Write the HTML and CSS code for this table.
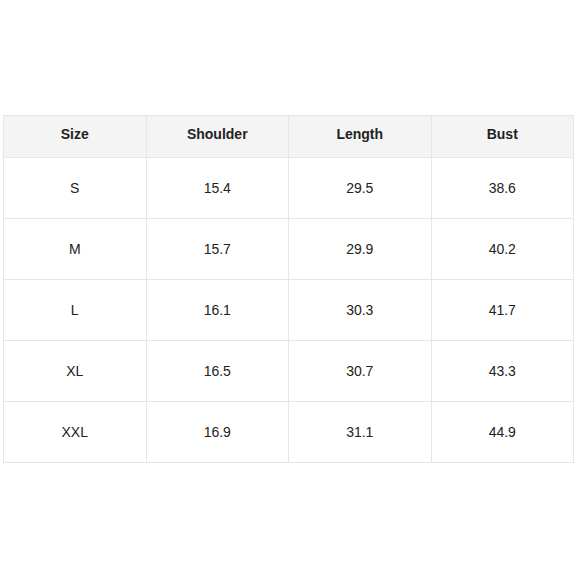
FILE: index.html
```html
<!DOCTYPE html>
<html>
<head>
<meta charset="utf-8">
<link rel="stylesheet" href="styles.css">
</head>
<body>
<div class="wrap">
<table class="sizes">
<thead>
<tr><th>Size</th><th>Shoulder</th><th>Length</th><th>Bust</th></tr>
</thead>
<tbody>
<tr><td>S</td><td>15.4</td><td>29.5</td><td>38.6</td></tr>
<tr><td>M</td><td>15.7</td><td>29.9</td><td>40.2</td></tr>
<tr><td>L</td><td>16.1</td><td>30.3</td><td>41.7</td></tr>
<tr><td>XL</td><td>16.5</td><td>30.7</td><td>43.3</td></tr>
<tr><td>XXL</td><td>16.9</td><td>31.1</td><td>44.9</td></tr>
</tbody>
</table>
</div>
</body>
</html>
```
FILE: styles.css
```css
html, body {
  margin: 0;
  padding: 0;
  background: #ffffff;
}
body {
  font-family: "Liberation Sans", Arial, sans-serif;
  color: #222222;
}
.wrap {
  padding: 115px 0 0 3px;
}
.sizes {
  border-collapse: collapse;
  width: 571px;
  table-layout: fixed;
}
.sizes th, .sizes td {
  border: 1px solid #e6e6e6;
  text-align: center;
  font-size: 14px;
  padding: 0;
}
.sizes th {
  background: #f4f4f4;
  font-weight: bold;
  height: 36px;
  padding-bottom: 5px;
}
.sizes td {
  height: 60px;
}
```
